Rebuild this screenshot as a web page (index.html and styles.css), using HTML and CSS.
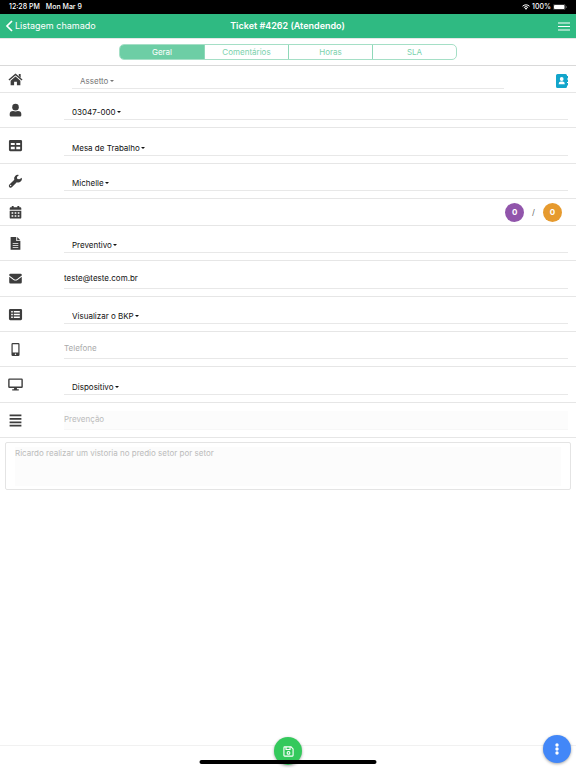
FILE: index.html
```html
<!DOCTYPE html>
<html lang="pt-BR">
<head>
<meta charset="utf-8">
<meta name="viewport" content="width=device-width, initial-scale=1">
<title>Ticket #4262</title>
<link rel="stylesheet" href="styles.css">
</head>
<body>
<div class="status">
  <span>12:28 PM</span>
  <span class="status-date">Mon Mar 9</span>
  <svg class="wifi" viewBox="0 0 16 12" aria-hidden="true"><g fill="none" stroke="currentColor" stroke-width="2"><path d="M1 4.500a10 10 0 0 1 14 0M3.700 7.200a6 6 0 0 1 8.600 0"/></g><path fill="currentColor" d="M5.500 9a3.500 3.500 0 0 1 5 0L8 11.700z"/></svg>
  <span>100%</span>
  <svg class="battery" viewBox="0 0 28 12" aria-hidden="true"><rect x=".5" y=".5" width="24" height="11" rx="3" fill="none" stroke="#888"/><rect x="2" y="2" width="21" height="8" rx="1.500" fill="#fff"/><path d="M26 4v4q1.500-.5 1.500-2T26 4" fill="#888"/></svg>
</div>
<header class="bar">
  <a class="back" href="#"><svg viewBox="0 0 8 12" aria-hidden="true"><path d="M7 1L2 6l5 5" fill="none" stroke="currentColor" stroke-width="1.700"/></svg>Listagem chamado</a>
  <h1>Ticket #4262 (Atendendo)</h1>
  <button class="menu" type="button" aria-label="Menu"><svg viewBox="0 0 12 9" aria-hidden="true"><path d="M0 1h12M0 4.500h12M0 8h12" stroke="currentColor" stroke-width="1.200"/></svg></button>
</header>
<nav class="tabs">
  <div class="segment">
    <button type="button" class="active">Geral</button>
    <button type="button">Comentários</button>
    <button type="button">Horas</button>
    <button type="button">SLA</button>
  </div>
</nav>
<main>
<form class="rows">
  <div class="row short">
    <label class="icon" for="f1" aria-label="Cliente"><svg viewBox="0 0 16 16"><path d="M8 4.800L2.800 9.200V14h3.700v-3.500h3V14h3.700V9.200z"/><path d="M1 8.500L8 2.500l7 6" fill="none" stroke="currentColor" stroke-width="1.500"/><path d="M11.500 2h2v4l-2-1.700z"/></svg></label>
    <div class="field inset muted"><select id="f1"><option>Assetto</option></select><i class="caret"></i></div>
    <button class="contact" type="button" aria-label="Contatos"><svg viewBox="0 0 12 14"><path fill="#12a5cb" d="M1.500 0h8q1.500 0 1.500 1.500V2h1v2.500h-1v1h1V8h-1v1h1v2.500h-1v1q0 1.500-1.500 1.500h-8Q0 14 0 12.500v-11Q0 0 1.500 0"/><circle cx="5.700" cy="5" r="1.900" fill="#fff"/><path fill="#fff" d="M2.600 10.300q0-2.700 2-2.700h2.200q2 0 2 2.700z"/></svg></button>
  </div>
  <div class="row">
    <label class="icon" for="f2" aria-label="Usuário"><svg viewBox="0 0 16 16"><circle cx="8" cy="4.400" r="3.500"/><path d="M1.800 13v-1.200q0-3.300 3.600-3.300 2.600 1 5.200 0 3.600 0 3.600 3.300V13q0 1.500-1.400 1.500H3.200Q1.800 14.500 1.800 13"/></svg></label>
    <div class="field"><select id="f2"><option>03047-000</option></select><i class="caret"></i></div>
  </div>
  <div class="row">
    <label class="icon" for="f3" aria-label="Mesa"><svg viewBox="0 0 16 16"><path fill-rule="evenodd" d="M2.400 2h11.200q1.400 0 1.400 1.400v9.200q0 1.400-1.400 1.400H2.400Q1 14 1 12.600V3.400Q1 2 2.400 2M3 5.300v2.200h4.200V5.300zm5.800 0v2.200H13V5.300zM3 9.200v2.700h4.200V9.200zm5.800 0v2.700H13V9.200z"/></svg></label>
    <div class="field"><select id="f3"><option>Mesa de Trabalho</option></select><i class="caret"></i></div>
  </div>
  <div class="row">
    <label class="icon" for="f4" aria-label="Técnico"><svg viewBox="0 0 16 16"><path fill-rule="evenodd" d="M14.800 4.100a4 4 0 0 1-5.400 4.600L4.100 14.200a2 2 0 0 1-2.800-2.800l5.400-5.300A4 4 0 0 1 11.700 1L9.500 3.200l.4 2 2.200.5zM3.500 12a.7.700 0 1 0-1 .9.700.7 0 0 0 1-.9"/></svg></label>
    <div class="field"><select id="f4"><option>Michelle</option></select><i class="caret"></i></div>
  </div>
  <div class="row short">
    <span class="icon"><svg viewBox="0 0 16 16"><path fill-rule="evenodd" d="M4 1h2v1.500h4V1h2v1.500h1q1.200 0 1.200 1.200V5H1.800V3.700q0-1.200 1.200-1.200h1zM1.800 6h12.400v7.200q0 1.300-1.200 1.300H3q-1.200 0-1.200-1.300zm2 1.600v1.800h1.800V7.600zm3.300 0v1.800h1.800V7.600zm3.300 0v1.800h1.800V7.600zm-6.600 3.200v1.800h1.800v-1.800zm3.300 0v1.800h1.800v-1.800zm3.300 0v1.800h1.800v-1.800z"/></svg></span>
    <div class="counts"><span class="count purple">0</span><span>/</span><span class="count orange">0</span></div>
  </div>
  <div class="row">
    <label class="icon" for="f5" aria-label="Tipo"><svg viewBox="0 0 16 16"><path fill-rule="evenodd" d="M2.800 1h6v4.300h4.400v9.400H2.800zM5 7.400v.9h6v-.9zm0 2.100v.9h6v-.9zm0 2.100v.9h6v-.9z"/><path d="M9.800 1l3.400 3.500H9.800z"/></svg></label>
    <div class="field"><select id="f5"><option>Preventivo</option></select><i class="caret"></i></div>
  </div>
  <div class="row">
    <label class="icon" for="f6" aria-label="E-mail"><svg viewBox="0 0 16 16"><path d="M1.300 4.300q0-1.300 1.300-1.300h10.800q1.300 0 1.300 1.300v.5Q11.500 7.200 9.500 8.700q-1.500 1-3 0-2-1.500-5.200-3.900zM1.300 6l4.600 3.500q2.100 1.300 4.200 0L14.700 6v6q0 1.300-1.300 1.300H2.600Q1.300 13.300 1.300 12z"/></svg></label>
    <div class="field"><input id="f6" type="email" value="teste@teste.com.br"></div>
  </div>
  <div class="row">
    <label class="icon" for="f7" aria-label="Serviço"><svg viewBox="0 0 16 16"><path fill-rule="evenodd" d="M2.400 2h11.200q1.400 0 1.400 1.400v9.200q0 1.400-1.400 1.400H2.400Q1 14 1 12.600V3.400Q1 2 2.400 2M3.400 4.300v1.500h1.700V4.300zm2.800 0v1.500h6.400V4.300zM3.400 7.200v1.500h1.700V7.200zm2.800 0v1.500h6.400V7.200zm-2.800 3v1.500h1.700v-1.500zm2.800 0v1.500h6.400v-1.500z"/></svg></label>
    <div class="field"><select id="f7"><option>Visualizar o BKP</option></select><i class="caret"></i></div>
  </div>
  <div class="row">
    <label class="icon" for="f8" aria-label="Telefone"><svg viewBox="0 0 16 16"><path fill-rule="evenodd" d="M5 1h6q1.300 0 1.300 1.300v11.400Q12.300 15 11 15H5q-1.300 0-1.300-1.300V2.300Q3.700 1 5 1m0 1.300v8.900h6V2.300zm3 9.900a.8.800 0 1 0 0 1.600.8.800 0 0 0 0-1.600"/></svg></label>
    <div class="field"><input id="f8" type="tel" placeholder="Telefone"></div>
  </div>
  <div class="row">
    <label class="icon" for="f9" aria-label="Dispositivo"><svg viewBox="0 0 16 16"><path fill-rule="evenodd" d="M1.500 1.500h13q1.300 0 1.300 1.300v7.600q0 1.300-1.300 1.300H9.500v1.400h2v1.400h-7v-1.400h2v-1.400h-5Q.2 11.700.2 10.400V2.800q0-1.300 1.300-1.300m.2 1.500v7.200h12.600V3z"/></svg></label>
    <div class="field"><select id="f9"><option>Dispositivo</option></select><i class="caret"></i></div>
  </div>
  <div class="row">
    <label class="icon" for="f10" aria-label="Assunto"><svg viewBox="0 0 16 16"><path d="M1.700 2.500h12.600M1.700 6.200h12.600M1.700 9.900h12.600M1.700 13.500h12.600" stroke="currentColor" stroke-width="1.900"/></svg></label>
    <div class="field off"><input id="f10" type="text" placeholder="Prevenção" disabled></div>
  </div>
  <div class="note"><textarea aria-label="Descrição" disabled>Ricardo realizar um vistoria no predio setor por setor</textarea></div>
</form>
</main>
<footer>
  <button class="fab save" type="button" aria-label="Salvar"><svg viewBox="0 0 12 12"><g fill="none" stroke="#fff" stroke-width="1.200"><path d="M1.800 1h7L11 3.200v7q0 .8-.8.800H1.800q-.8 0-.8-.8V1.800Q1 1 1.800 1z"/><path d="M3.300 1v2.800h4.400V1"/><circle cx="6" cy="7.500" r="1.500"/></g></svg></button>
  <button class="fab more" type="button" aria-label="Mais opções"><svg viewBox="0 0 12 12" fill="#fff"><circle cx="6" cy="2" r="1.700"/><circle cx="6" cy="6" r="1.700"/><circle cx="6" cy="10" r="1.700"/></svg></button>
  <div class="home"></div>
</footer>
</body>
</html>
```
FILE: styles.css
```css
* { box-sizing: border-box; }

body {
  margin: 0;
  min-height: 100vh;
  display: flex;
  flex-direction: column;
  background: #fff;
  color: #111;
  font: 8px/12px Inter, "Liberation Sans", sans-serif;
}

button, input, select, textarea {
  margin: 0;
  padding: 0;
  border: 0;
  border-radius: 0;
  background: none;
  color: inherit;
  font: inherit;
  appearance: none;
}

svg { display: block; }

.status {
  height: 14px;
  padding: 0 9px;
  display: flex;
  align-items: center;
  background: #000;
  color: #fff;
  font-size: 7px;
  font-weight: 500;
}
.status-date { margin: 0 auto 0 6px; }
.wifi { width: 8px; height: 6px; margin-right: 2px; }
.battery { width: 14px; height: 6px; margin-left: 2px; }

.bar {
  height: 24px;
  padding: 0 6px 0 5px;
  display: grid;
  grid-template-columns: 1fr auto 1fr;
  align-items: center;
  background: #2fba82;
  color: #fff;
  font-size: 9px;
}
.bar h1 { margin: 0; font-size: 9px; font-weight: 600; }
.back { display: flex; align-items: center; gap: 2px; color: inherit; text-decoration: none; }
.back svg { width: 8px; height: 12px; }
.menu { justify-self: end; }
.menu svg { width: 12px; height: 9px; }

.tabs {
  height: 28px;
  display: flex;
  align-items: center;
  justify-content: center;
  border-top: 1px solid #e6e6e6;
  border-bottom: 1px solid #d9d9d9;
}
.segment {
  width: 59%;
  max-width: 338px;
  height: 16px;
  display: grid;
  grid-template-columns: repeat(4, 1fr);
  border: 1px solid #a5dfc6;
  border-radius: 5px;
  overflow: hidden;
  color: #7ad1ac;
}
.segment button + button { border-left: 1px solid #8fd8b9; }
.segment .active { background: #6dcea5; color: #fff; }

.rows {
  display: grid;
  grid-template-rows: 27px 35px 36px 35px 27px 35px 36px 35px 35px 36px 35px auto;
}
.row {
  display: grid;
  grid-template-columns: 64px 1fr;
  padding-right: 8px;
  border-bottom: 1px solid #e6e6e6;
}
.row.short:first-child { grid-template-columns: 72px 1fr 64px; padding-right: 8px; }
.icon { align-self: center; padding-left: 8px; color: #3d3d3d; }
.icon svg { width: 15px; height: 15px; fill: currentColor; }

.field {
  align-self: end;
  height: 19px;
  margin-bottom: 7px;
  padding: 3px 0 0 8px;
  display: flex;
  align-items: center;
  border-bottom: 1px solid #e8e8e8;
}
.field.inset { margin-bottom: 3px; }
.muted { color: #777; }
.caret {
  margin-left: 1px;
  border: 2px solid transparent;
  border-top-color: currentColor;
  border-bottom: 0;
}
.field:has(input) { padding: 0 0 3px; }
.field input { width: 100%; height: 12px; }
input::placeholder { color: #aaa; opacity: 1; }
.field.off { border-color: #f7f7f7; background: #fcfcfc; }
.off input::placeholder { color: #bbb; }
.contact { align-self: center; justify-self: end; margin-top: 4px; }
.contact svg { width: 12px; height: 14px; }

.counts { display: flex; align-items: center; justify-content: flex-end; gap: 8px; padding-right: 6px; color: #666; }
.count {
  width: 19px;
  height: 19px;
  display: grid;
  place-items: center;
  border-radius: 50%;
  color: #fff;
  font-weight: 700;
}
.purple { background: #9155ab; }
.orange { background: #e69a2e; }

.note {
  margin: 4px 5px 0;
  padding: 4px 9px 3px;
  border: 1px solid #e4e4e4;
  border-radius: 2px;
}
.note textarea { display: block; width: 100%; height: 39px; resize: none; background: #fcfcfc; color: #bbb; }

footer {
  position: relative;
  height: 23px;
  margin-top: auto;
  border-top: 1px solid #f1f1f1;
}
.fab {
  position: absolute;
  width: 28px;
  height: 28px;
  display: grid;
  place-items: center;
  border-radius: 50%;
  box-shadow: 0 1px 3px rgba(0, 0, 0, .35);
}
.fab svg { width: 12px; height: 12px; }
.save { top: -9px; left: calc(50% - 14px); background: #34c95c; }
.save svg { width: 11px; height: 11px; }
.more { top: -11px; right: 5px; background: #4287f8; }
.home {
  position: absolute;
  bottom: 4px;
  left: 50%;
  width: 177px;
  height: 4px;
  border-radius: 2px;
  background: #000;
  transform: translateX(-50%);
}
```
